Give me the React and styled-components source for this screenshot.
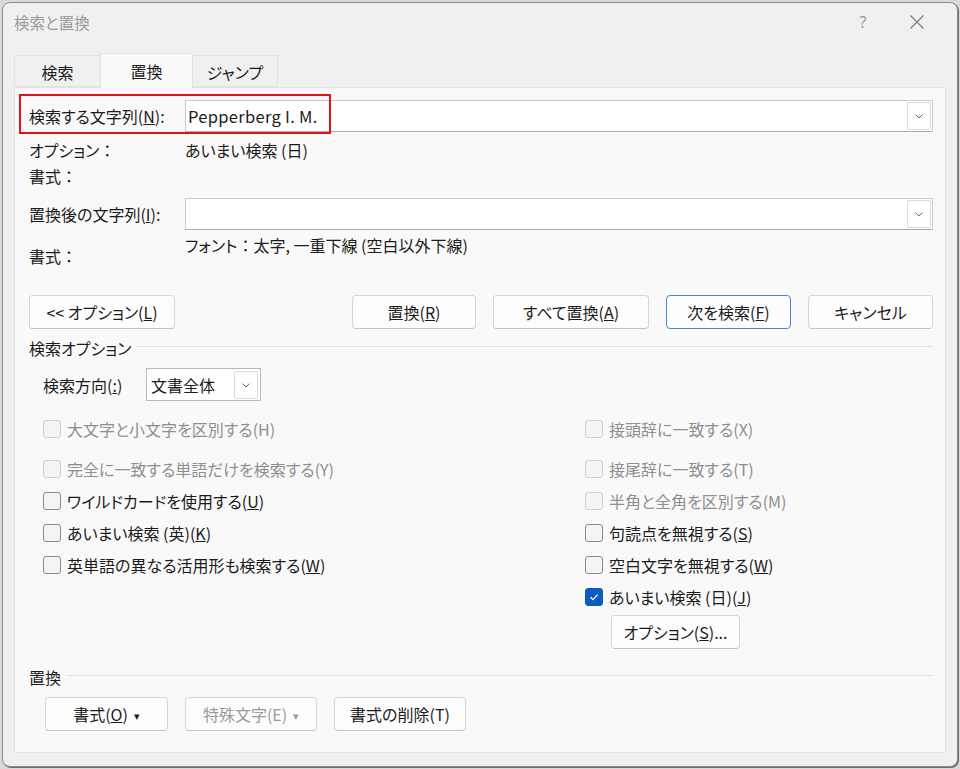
import React from "react";
import styled, { createGlobalStyle } from "styled-components";

const GlobalStyle = createGlobalStyle`
  html, body {
    margin: 0;
    padding: 0;
    background: #d9d9d9;
  }
  body {
    font-family: "Noto Sans CJK JP", "Noto Sans", sans-serif;
    font-size: 16px;
    color: #1b1b1b;
    font-feature-settings: "palt";
  }
  * { box-sizing: border-box; }
`;

const Key = ({ children }) => <u>{children}</u>;

// full-width colon kept at its full width, as in the dialog
const Colon = styled.span`
  font-feature-settings: normal;
  display: inline-block;
  width: 1em;
  text-align: center;
`;

function Chevron({ size = 12 }) {
  return (
    <svg width={size} height={size} viewBox="0 0 12 12">
      <path d="M2.5 4.5 L6 8 L9.5 4.5" fill="none" stroke="#6b6b6b" strokeWidth="1" />
    </svg>
  );
}

function CheckItem({ label, disabled, checked }) {
  return (
    <CheckRow disabled={disabled}>
      <Box disabled={disabled} checked={checked}>
        {checked && (
          <svg width="12" height="12" viewBox="0 0 12 12">
            <path d="M2.5 6.3 L5 8.6 L9.6 3.6" fill="none" stroke="#fff" strokeWidth="1.2" />
          </svg>
        )}
      </Box>
      <span>{label}</span>
    </CheckRow>
  );
}

export default function App() {
  return (
    <>
      <GlobalStyle />
      <Window>
        <TitleBar>
          <Title>検索と置換</Title>
          <TitleButtons>
            <HelpBtn>?</HelpBtn>
            <CloseBtn>
              <svg width="16" height="16" viewBox="0 0 16 16">
                <path d="M1.5 1.5 L14.5 14.5 M14.5 1.5 L1.5 14.5" stroke="#7a7a7a" strokeWidth="1.1" />
              </svg>
            </CloseBtn>
          </TitleButtons>
        </TitleBar>

        <Body>
          <TabStrip>
            <Tab w={87}>検索</Tab>
            <Tab w={93} active>置換</Tab>
            <Tab w={86}>ジャンプ</Tab>
          </TabStrip>

          <Panel>
            <FieldRow mt={12}>
              <Highlight />
              <FieldLabel>
                検索する文字列(<Key>N</Key>):
              </FieldLabel>
              <Combo>
                <ComboText>Pepperberg I. M.</ComboText>
                <DropBtn>
                  <Chevron />
                </DropBtn>
              </Combo>
            </FieldRow>

            <InfoRow mt={8}>
              <FieldLabel>
                オプション<Colon>：</Colon>
              </FieldLabel>
              <span>あいまい検索 (日)</span>
            </InfoRow>
            <InfoRow mt={6}>
              <FieldLabel>
                書式<Colon>：</Colon>
              </FieldLabel>
            </InfoRow>

            <FieldRow mt={12}>
              <FieldLabel>
                置換後の文字列(<Key>I</Key>):
              </FieldLabel>
              <Combo>
                <ComboText />
                <DropBtn>
                  <Chevron />
                </DropBtn>
              </Combo>
            </FieldRow>

            <FormatRow>
              <FormatLabel>
                書式<Colon>：</Colon>
              </FormatLabel>
              <span>
                フォント<Colon>：</Colon>太字, 一重下線 (空白以外下線)
              </span>
            </FormatRow>

            <ButtonRow>
              <Button w={146}>
                &lt;&lt; オプション(<Key>L</Key>)
              </Button>
              <ButtonGroup>
                <Button w={124}>
                  置換(<Key>R</Key>)
                </Button>
                <Button w={156}>
                  すべて置換(<Key>A</Key>)
                </Button>
                <Button w={125} primary>
                  次を検索(<Key>F</Key>)
                </Button>
                <Button w={125}>キャンセル</Button>
              </ButtonGroup>
            </ButtonRow>

            <GroupHeader mt={9}>
              <span>検索オプション</span>
            </GroupHeader>

            <DirectionRow>
              <span>
                検索方向(<Key>:</Key>)
              </span>
              <Select>
                <SelectText>文書全体</SelectText>
                <DropBtn>
                  <Chevron />
                </DropBtn>
              </Select>
            </DirectionRow>

            <CheckGrid>
              <CheckColumn>
                <CheckItem disabled label="大文字と小文字を区別する(H)" />
                <CheckItem disabled label="完全に一致する単語だけを検索する(Y)" />
                <CheckItem label={<>ワイルドカードを使用する(<Key>U</Key>)</>} />
                <CheckItem label={<>あいまい検索 (英)(<Key>K</Key>)</>} />
                <CheckItem label={<>英単語の異なる活用形も検索する(<Key>W</Key>)</>} />
              </CheckColumn>
              <CheckColumn>
                <CheckItem disabled label="接頭辞に一致する(X)" />
                <CheckItem disabled label="接尾辞に一致する(T)" />
                <CheckItem disabled label="半角と全角を区別する(M)" />
                <CheckItem label={<>句読点を無視する(<Key>S</Key>)</>} />
                <CheckItem label={<>空白文字を無視する(<Key>W</Key>)</>} />
                <CheckItem checked label={<>あいまい検索 (日)(<Key>J</Key>)</>} />
                <OptionsButton w={129}>
                  オプション(<Key>S</Key>)...
                </OptionsButton>
              </CheckColumn>
            </CheckGrid>

            <GroupHeader mt={18}>
              <span>置換</span>
            </GroupHeader>

            <BottomButtons>
              <Button w={123}>
                書式(<Key>O</Key>)<Caret>▾</Caret>
              </Button>
              <Button w={132} disabled>
                特殊文字(E)<Caret>▾</Caret>
              </Button>
              <Button w={132}>書式の削除(T)</Button>
            </BottomButtons>
          </Panel>
        </Body>
      </Window>
    </>
  );
}

const Window = styled.div`
  width: 956px;
  height: 765px;
  margin: 2px;
  background: #f0f0f0;
  border: 1px solid #8c8c8c;
  border-radius: 8px;
  display: flex;
  flex-direction: column;
  overflow: hidden;
  box-shadow: 1px 1px 0 #6e6e6e;
`;

const TitleBar = styled.div`
  height: 38px;
  display: flex;
  align-items: center;
  justify-content: space-between;
  padding-left: 11px;
`;

const Title = styled.div`
  color: #9a9a9a;
  font-size: 15.5px;
`;

const TitleButtons = styled.div`
  display: flex;
  align-items: center;
  height: 100%;
`;

const HelpBtn = styled.div`
  width: 46px;
  text-align: center;
  color: #9a9a9a;
  font-size: 16px;
  font-family: "Noto Sans", sans-serif;
  margin-right: 8px;
`;

const CloseBtn = styled.div`
  width: 46px;
  display: flex;
  justify-content: center;
  margin-right: 17px;
`;

const Body = styled.div`
  flex: 1;
  display: flex;
  flex-direction: column;
  padding: 12px 11px 13px 11px;
`;

const TabStrip = styled.div`
  display: flex;
  align-items: flex-end;
  height: 34px;
`;

const Tab = styled.div`
  width: ${(p) => p.w}px;
  height: ${(p) => (p.active ? 35 : 32)}px;
  display: flex;
  align-items: center;
  justify-content: center;
  background: ${(p) => (p.active ? "#f9f9f9" : "#f0f0f0")};
  border: 1px solid #e2e2e2;
  border-bottom: ${(p) => (p.active ? "none" : "1px solid #e2e2e2")};
  margin-right: -1px;
  position: relative;
  top: ${(p) => (p.active ? 1 : 0)}px;
  z-index: ${(p) => (p.active ? 2 : 1)};
  padding-top: ${(p) => (p.active ? 0 : 2)}px;
  color: #1b1b1b;
`;

const Panel = styled.div`
  flex: 1;
  background: #f9f9f9;
  border: 1px solid #e2e2e2;
  padding: 0 12px 0 14px;
  display: flex;
  flex-direction: column;
`;

const FieldRow = styled.div`
  position: relative;
  display: grid;
  grid-template-columns: 156px 1fr;
  align-items: center;
  height: 32px;
  margin-top: ${(p) => p.mt}px;
`;

const Highlight = styled.div`
  position: absolute;
  left: -10px;
  top: -6px;
  width: 312px;
  height: 40px;
  border: 2px solid #e3121a;
  z-index: 3;
  pointer-events: none;
`;

const FieldLabel = styled.span`
  white-space: nowrap;
`;

const Combo = styled.div`
  height: 32px;
  background: #fff;
  border: 1px solid #c9c9cf;
  border-bottom-color: #a9a9b0;
  display: flex;
  align-items: center;
  padding: 0 1px 0 2px;
`;

const ComboText = styled.div`
  flex: 1;
  font-size: 16.5px;
  letter-spacing: 0.3px;
`;

const DropBtn = styled.div`
  width: 24px;
  height: 28px;
  border: 1px solid #dadada;
  border-radius: 2px;
  background: #fff;
  display: flex;
  align-items: center;
  justify-content: center;
`;

const InfoRow = styled.div`
  display: grid;
  grid-template-columns: 156px 1fr;
  height: 20px;
  line-height: 20px;
  margin-top: ${(p) => p.mt}px;
`;

const FormatRow = styled.div`
  display: grid;
  grid-template-columns: 156px 1fr;
  height: 31px;
  line-height: 20px;
  margin-top: 5px;
`;

const FormatLabel = styled.span`
  grid-row: 1;
  grid-column: 1;
  align-self: end;
`;

const ButtonRow = styled.div`
  display: flex;
  justify-content: space-between;
  margin-top: 29px;
`;

const ButtonGroup = styled.div`
  display: flex;
  gap: 17px;
`;

const Button = styled.div`
  width: ${(p) => p.w}px;
  height: 34px;
  line-height: 32px;
  text-align: center;
  background: #fdfdfd;
  border: 1px solid ${(p) => (p.primary ? "#3f8ad8" : "#d6d6d6")};
  border-bottom-color: ${(p) => (p.primary ? "#3f8ad8" : "#c4c4c4")};
  border-radius: 4px;
  color: ${(p) => (p.disabled ? "#9b9b9b" : "#1b1b1b")};
  white-space: nowrap;
`;

const OptionsButton = styled(Button)`
  margin-top: 2px;
  margin-left: 26px;
`;

const Caret = styled.span`
  font-size: 11px;
  margin-left: 6px;
  vertical-align: 1px;
`;

const GroupHeader = styled.div`
  display: flex;
  align-items: center;
  height: 20px;
  margin-top: ${(p) => p.mt}px;
  &::after {
    content: "";
    flex: 1;
    height: 1px;
    background: #e1e1e1;
    margin-left: 6px;
    margin-top: -3px;
  }
`;

const DirectionRow = styled.div`
  display: grid;
  grid-template-columns: 103px auto;
  justify-content: start;
  align-items: center;
  margin-top: 10px;
  margin-left: 14px;
`;

const Select = styled.div`
  width: 115px;
  height: 33px;
  background: #fff;
  border: 1px solid #b9b9b9;
  display: flex;
  align-items: center;
  padding: 0 2px 0 4px;
`;

const SelectText = styled.div`
  flex: 1;
`;

const CheckGrid = styled.div`
  display: grid;
  grid-template-columns: 542px 1fr;
  margin-top: 12px;
  margin-left: 14px;
`;

const CheckColumn = styled.div`
  display: grid;
  grid-template-rows: 32px 40px 32px 32px 32px 32px auto;
  justify-items: start;
`;

const CheckRow = styled.div`
  display: flex;
  align-items: center;
  gap: 6px;
  height: 32px;
  align-self: end;
  color: ${(p) => (p.disabled ? "#8e8e8e" : "#1b1b1b")};
`;

const Box = styled.div`
  width: 18px;
  height: 18px;
  border-radius: 3px;
  display: flex;
  align-items: center;
  justify-content: center;
  background: ${(p) => (p.checked ? "#0b5cbd" : "#f4f4f4")};
  border: 1px solid
    ${(p) => (p.checked ? "#0b5cbd" : p.disabled ? "#cfcfcf" : "#8a8a8a")};
`;

const BottomButtons = styled.div`
  display: flex;
  gap: 17px;
  margin-top: 10px;
  margin-left: 16px;
`;
